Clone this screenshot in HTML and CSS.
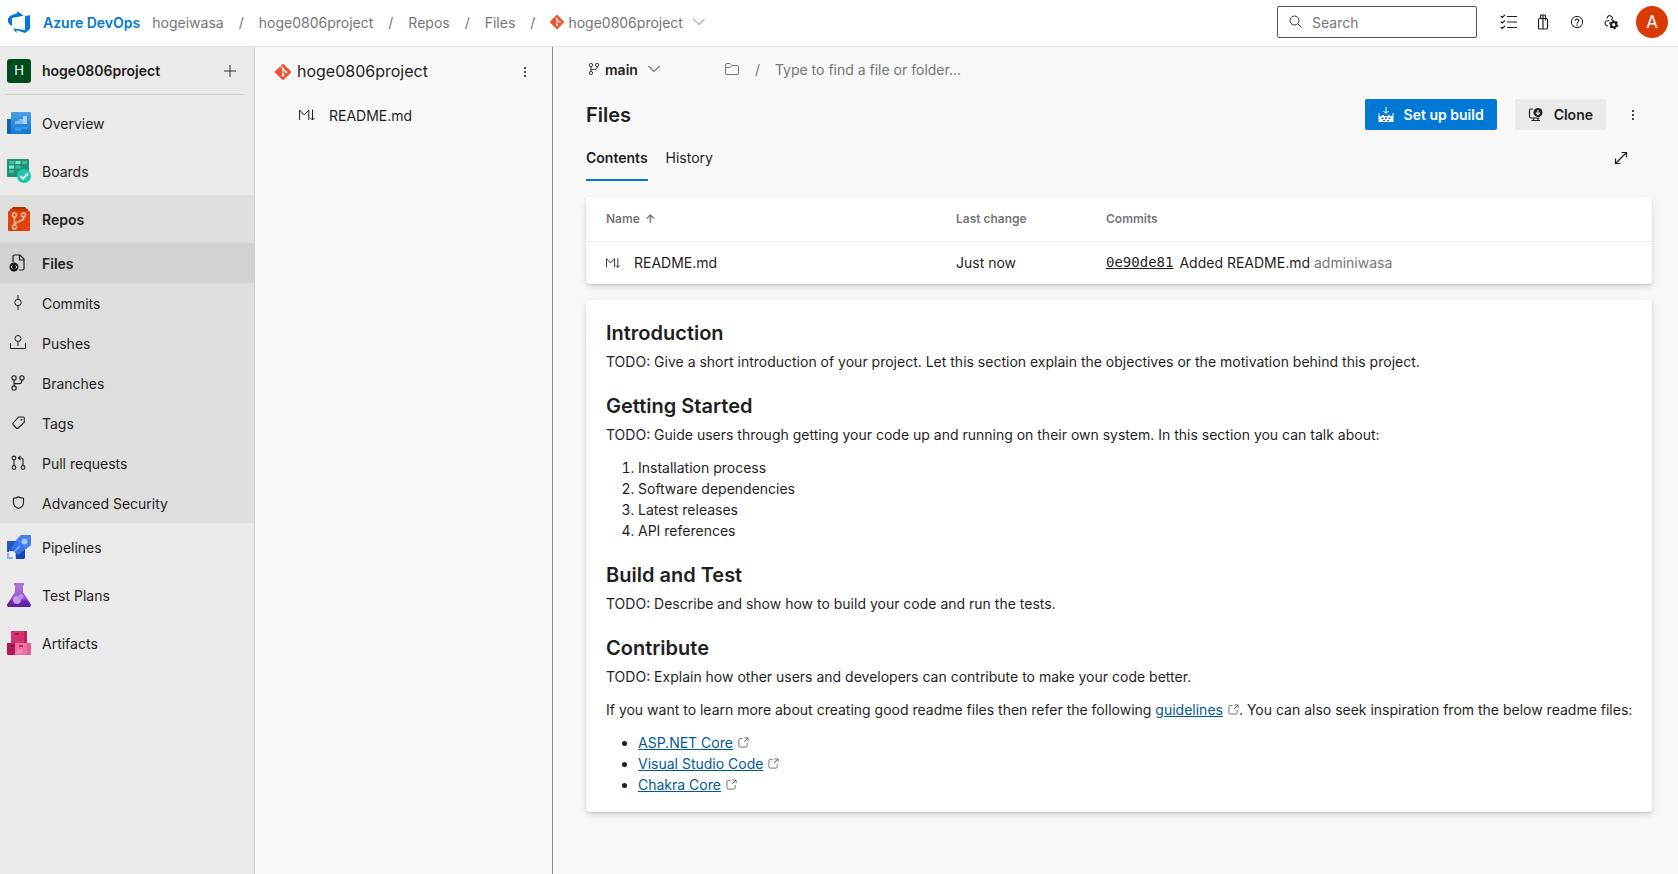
FILE: index.html
```html
<!DOCTYPE html>
<html lang="en">
<head>
<meta charset="utf-8">
<meta name="viewport" content="width=device-width, initial-scale=1">
<title>Files - Repos</title>
<link rel="stylesheet" href="styles.css">
</head>
<body>
<svg class="sprite" aria-hidden="true">
  <symbol id="git" viewBox="0 0 16 16">
    <path d="M7.1.4a1.3 1.3 0 0 1 1.8 0l6.7 6.7a1.3 1.3 0 0 1 0 1.8l-6.7 6.7a1.3 1.3 0 0 1-1.8 0L.4 8.9a1.3 1.3 0 0 1 0-1.800z" fill="#f1502f"/>
    <path d="M5.600 2.200 8 4.700v6.800M8.200 5.200l3 3" fill="none" stroke="#fff" stroke-width="1.100"/>
    <circle cx="8" cy="4.900" r="1.200" fill="#fff"/><circle cx="8" cy="11.500" r="1.200" fill="#fff"/><circle cx="11.100" cy="8" r="1.200" fill="#fff"/>
  </symbol>
  <symbol id="chevron" viewBox="0 0 12 12"><path d="m.5 3 5.500 5.500L11.500 3" fill="none" stroke="currentColor"/></symbol>
  <symbol id="branch" viewBox="0 0 16 16"><g fill="none" stroke="currentColor"><circle cx="4.500" cy="3.500" r="1.900"/><circle cx="11.500" cy="3.500" r="1.900"/><circle cx="4.500" cy="12.500" r="1.900"/><path d="M4.500 5.400v5.200M11.500 5.400v.6a2.500 2.500 0 0 1-2.500 2.500H4.500"/></g></symbol>
  <symbol id="markdown" viewBox="0 0 16 16"><path d="M.6 13V3l4.600 5 4.600-5v10M13.500 2.500V13M11.300 10.800l2.200 2.200 2.200-2.200" fill="none" stroke="currentColor"/></symbol>
  <symbol id="external" viewBox="0 0 12 12"><path d="M5 1.500H2.500a1.500 1.500 0 0 0-1.500 1.500v6.500a1.500 1.500 0 0 0 1.500 1.500h6a1.500 1.500 0 0 0 1.500-1.500V6.500M7 1h4v3.500M11 1 6.500 5.500" fill="none" stroke="currentColor" stroke-width=".9"/></symbol>
  <symbol id="more" viewBox="0 0 16 16"><path d="M7 3h2v2H7zM7 7h2v2H7zM7 11h2v2H7z" fill="#444"/></symbol>
</svg>

<header class="topbar">
  <a class="brand" href="#">
    <svg class="icon-22" viewBox="0 0 22 22"><path fill="#0078d4" d="M0 7.500 2 5l7.300-3V0l6.400 4.700L4 7v7.500l-2-.6-2-2.800zM22 4v14l-5 4-8.500-2.800V22L5 17.500l12 1.400V5.300z"/></svg>
    <span>Azure DevOps</span>
  </a>
  <nav class="crumbs" aria-label="Breadcrumb">
    <a href="#">hogeiwasa</a><span>/</span>
    <a href="#">hoge0806project</a><span>/</span>
    <a href="#">Repos</a><span>/</span>
    <a href="#">Files</a><span>/</span>
    <button class="crumb-repo" type="button"><svg class="icon-14"><use href="#git"/></svg>hoge0806project<svg class="icon-12"><use href="#chevron"/></svg></button>
  </nav>
  <label class="search">
    <svg class="icon-14" viewBox="0 0 14 14"><g fill="none" stroke="#333"><circle cx="6.500" cy="5.500" r="4.500"/><path d="m9.700 8.700 4 4"/></g></svg>
    <input type="search" placeholder="Search" aria-label="Search">
  </label>
  <div class="tools">
    <button type="button" aria-label="Work items"><svg class="icon-18" viewBox="0 0 18 18"><path d="M7 3.500h10M7 9h10M7 14.500h10M.8 3l1.500 1.500L5 1.800M.8 8.500 2.300 10 5 7.300M.8 14l1.500 1.500L5 12.800" fill="none" stroke="#1f1f1f" stroke-width="1.200"/></svg></button>
    <button type="button" aria-label="Marketplace"><svg class="icon-18" viewBox="0 0 18 18"><g fill="none" stroke="#1f1f1f" stroke-width="1.200"><rect x="4.500" y="5.500" width="9" height="10.500" rx="1.200"/><path d="M6.500 5.500V3a1 1 0 0 1 1-1h3a1 1 0 0 1 1 1v2.500M9 2v14M6.500 5.500h5v2"/></g></svg></button>
    <button type="button" aria-label="Help"><svg class="icon-18" viewBox="0 0 18 18"><circle cx="9" cy="9" r="5.600" fill="none" stroke="#1f1f1f"/><path d="M7.300 7.700a1.700 1.700 0 1 1 2.700 1.400c-.7.500-1 .8-1 1.600" fill="none" stroke="#1f1f1f" stroke-width="1.100"/><circle cx="9" cy="12" r=".7" fill="#1f1f1f"/></svg></button>
    <button type="button" aria-label="User settings"><svg class="icon-18" viewBox="0 0 18 18"><g fill="none" stroke="#1f1f1f" stroke-width="1.100"><path d="M5.200 5.500C5 3.600 6.400 2.500 8 2.700c2.400.3 3.200 2.700 1.500 4.300M7.500 7.800H5.500C3.500 8 2.500 9.500 3.300 11.300c.5 1.200 1.500 1.700 2.700 1.700"/></g><g fill="none" stroke="#1f1f1f"><circle cx="11.700" cy="11.700" r="2.600" stroke-width="2"/><circle cx="11.700" cy="11.700" r="3.900" stroke-width="1.400" stroke-dasharray="2.040 2.040"/></g></svg></button>
  </div>
  <button class="avatar" type="button" aria-label="Account">A</button>
</header>

<div class="shell">
  <aside class="sidebar">
    <div class="project">
      <span class="project-tile">H</span>
      <a href="#">hoge0806project</a>
      <button type="button" aria-label="Create new"><svg class="icon-12" viewBox="0 0 12 12"><path d="M6 0v12M0 6h12" stroke="#333" fill="none"/></svg></button>
    </div>
    <nav class="menu" aria-label="Project">
      <a class="hub" href="#"><svg class="icon-24" viewBox="0 0 24 24"><defs><linearGradient id="ov" x2="0" y2="1"><stop stop-color="#4a9ee8"/><stop offset="1" stop-color="#0f78d4"/></linearGradient></defs><path d="M0 8h6v15H1a1 1 0 0 1-1-1z" fill="#1260a8"/><rect x="4" y="1" width="20" height="22" rx="1" fill="url(#ov)"/><path d="M8 13V10h4V8h4V5h4v8z" fill="#83bdf1"/><path d="M16 5h4v8h-4z" fill="#a9d3f7"/><path d="M8 16h12v2H8zM8 18h6v2H8z" fill="#3f97e4"/></svg><span>Overview</span></a>
      <a class="hub" href="#"><svg class="icon-24" viewBox="0 0 24 24"><rect width="22" height="18" rx="1" fill="#22937a"/><path d="M2 2h5v3H2zM8.500 2h5v3h-5zM15 2h5v3h-5zM2 6.500h5v3H2zM8.500 6.500h5v3h-5zM2 11h5v3H2z" fill="#43b99d"/><path d="M8.500 2h5v3h-5zM2 6.500h5v3H2z" fill="#80e6c9"/><circle cx="17" cy="17" r="7" fill="#1dc7a8"/><path d="m13.300 17 2.700 2.700 4.800-4.900" fill="none" stroke="#fff" stroke-width="2"/></svg><span>Boards</span></a>
      <section class="group">
        <a class="hub hub-active" href="#"><svg class="icon-24" viewBox="0 0 24 24"><path d="M6 0h12l2 2v3H4V2z" fill="#b83100"/><rect x="1" y="4" width="22" height="20" rx="1" fill="#df420b"/><path d="M3 2h18v2H3z" fill="#c43a04"/><g fill="none" stroke="#ffc0a3" stroke-width="1.500"><circle cx="7.500" cy="8" r="2"/><circle cx="16.500" cy="8" r="2"/><circle cx="7.500" cy="20" r="2"/><path d="M7.500 10v8M16.500 10v2.500l-9 4"/></g></svg><span>Repos</span></a>
        <a class="sub sub-active" href="#"><svg class="icon-18" viewBox="0 0 18 18"><path d="M4 8V2.500A1.500 1.500 0 0 1 5.500 1h5.500L15 5v9.500a1.500 1.500 0 0 1-1.500 1.500H10M10.500 1v5H15" fill="none" stroke="#1f1f1f" stroke-width="1.200"/><circle cx="5" cy="13" r="4.500" fill="#1f1f1f"/><path d="m3.500 11.500-1.500 1.500 1.500 1.500M6.500 11.500 8 13l-1.500 1.500" fill="none" stroke="#ddd"/></svg><span>Files</span></a>
        <a class="sub" href="#"><svg class="icon-18" viewBox="0 0 18 18"><g fill="none" stroke="#1f1f1f"><circle cx="9" cy="8.500" r="3.200"/><path d="M9 1v4M9 12v4"/></g></svg><span>Commits</span></a>
        <a class="sub" href="#"><svg class="icon-18" viewBox="0 0 18 18"><g fill="none" stroke="#1f1f1f"><circle cx="9" cy="4.500" r="3"/><path d="M9 8v4M1.500 9v5.500h15V9"/></g></svg><span>Pushes</span></a>
        <a class="sub" href="#"><svg class="icon-18"><use href="#branch"/></svg><span>Branches</span></a>
        <a class="sub" href="#"><svg class="icon-18" viewBox="0 0 18 18"><path d="M9.500 3h4.800c.6 0 1 .4 1 1v4.300L9.200 14a1.300 1.300 0 0 1-1.900 0L4.200 10.800a1.300 1.300 0 0 1 0-1.800z" fill="none" stroke="#1f1f1f" stroke-width="1.100"/><circle cx="12.500" cy="5.700" r=".9" fill="#1f1f1f"/></svg><span>Tags</span></a>
        <a class="sub" href="#"><svg class="icon-18" viewBox="0 0 18 18"><g fill="none" stroke="#1f1f1f" stroke-width="1.100"><circle cx="5" cy="4" r="1.900"/><circle cx="5" cy="13.500" r="1.900"/><circle cx="14" cy="13.500" r="1.900"/><path d="M5 6v5.500M14 11.500V5.500a1.500 1.500 0 0 0-1.500-1.500H9.300M11.500 1.800 9.300 4l2.200 2.200"/></g></svg><span>Pull requests</span></a>
        <a class="sub" href="#"><svg class="icon-18" viewBox="0 0 18 18"><path d="M9.500 2.700c1.500 1.100 3 1.500 5 1.500v4.500c0 2.800-2 4.600-5 5.800-3-1.200-5-3-5-5.800V4.200c2 0 3.500-.4 5-1.500z" fill="none" stroke="#1f1f1f" stroke-width="1.100"/></svg><span>Advanced Security</span></a>
      </section>
      <a class="hub" href="#"><svg class="icon-24" viewBox="0 0 24 24"><path d="M0 6h10v11H0z" fill="#2459c4"/><path d="M8 14h10v9l-1 1H9z" fill="#1847b8"/><path d="M14 0h10v10L11 20l-7-7z" fill="#3972e6"/><path d="M14 0h10v10L19 14 9 5z" fill="#4a80ec"/><path d="m13 11-7 7" stroke="#80adf8" stroke-width="1.500"/><circle cx="17.500" cy="6.500" r="3" fill="#a5c4fb"/><path d="M0 18h2v4h4v2H0z" fill="#8fb3f7"/><path d="M2 16h4l3 3-3 3H4v-3H2z" fill="#e3edfd"/></svg><span>Pipelines</span></a>
      <a class="hub" href="#"><svg class="icon-24" viewBox="0 0 24 24"><defs><linearGradient id="fl" x2="0" y2="1"><stop stop-color="#b07ad9"/><stop offset=".65" stop-color="#9050cd"/><stop offset=".72" stop-color="#6d2bb4"/><stop offset="1" stop-color="#5a1da0"/></linearGradient></defs><path d="M8 2h8v7l7.600 12c.8 1.500 0 3-1.600 3H2c-1.600 0-2.400-1.500-1.600-3L8 9z" fill="url(#fl)"/><rect x="7" width="10" height="2.500" fill="#a46fdb"/><circle cx="10" cy="17" r="4" fill="#c79bea"/><circle cx="14" cy="13.500" r="2.500" fill="#bd8be5"/></svg><span>Test Plans</span></a>
      <a class="hub" href="#"><svg class="icon-24" viewBox="0 0 24 24"><path d="M4 0h16v12H4z" fill="#d2336f"/><path d="M17 0h3v12h-3z" fill="#bd2360"/><path d="M8 2h4v2H8z" fill="#a61550"/><path d="M0 12h8v12H1a1 1 0 0 1-1-1z" fill="#b51a57"/><path d="M4 14h4v2H4z" fill="#860d3d"/><path d="M8 12h16v11a1 1 0 0 1-1 1H8z" fill="#ee71a4"/><path d="M20 12h4v12h-4z" fill="#e75e96"/><path d="M12 14h4v2h-4z" fill="#c02964"/><path d="M10 19h6v1h-6zM10 21h4v1h-4z" fill="#f8a9c9"/></svg><span>Artifacts</span></a>
    </nav>
  </aside>

  <section class="tree" aria-label="Repository files">
    <div class="tree-head">
      <svg class="icon-16"><use href="#git"/></svg>
      <h2>hoge0806project</h2>
      <button type="button" aria-label="More actions"><svg class="icon-16"><use href="#more"/></svg></button>
    </div>
    <a class="tree-file" href="#"><svg class="icon-16"><use href="#markdown"/></svg><span>README.md</span></a>
  </section>

  <main class="main">
    <div class="pathbar">
      <button class="branch" type="button"><svg class="icon-14"><use href="#branch"/></svg><span>main</span><svg class="icon-12"><use href="#chevron"/></svg></button>
      <svg class="icon-16 muted" viewBox="0 0 16 16"><path d="M1.500 4A1.500 1.500 0 0 1 3 2.500h3L8 4.500h5A1.500 1.500 0 0 1 14.500 6v6a1.500 1.500 0 0 1-1.500 1.500H3A1.500 1.500 0 0 1 1.500 12zM1.500 6.500H6l2-2" fill="none" stroke="currentColor"/></svg>
      <span class="muted">/</span>
      <input class="path" type="text" placeholder="Type to find a file or folder..." aria-label="Path">
    </div>
    <div class="titlebar">
      <h1>Files</h1>
      <button class="btn btn-primary" type="button"><svg class="icon-16" viewBox="0 0 16 16"><path d="M8 0v6M5.500 4 8 6.500 10.500 4" fill="none" stroke="#fff"/><path d="M.5 6v9h15V6h-1v3H12V8h-2v1H6V8H4v1H1.500V6z" fill="#fff"/><path d="M3.500 10.500h2V12h-2zM7 10.500h2V12H7zM10.500 10.500h2V12h-2zM5 13h2v1H5zM9 13h2v1H9z" fill="#0078d4"/></svg>Set up build</button>
      <button class="btn" type="button"><svg class="icon-16" viewBox="0 0 16 16"><path d="M5 2H3a1.500 1.500 0 0 0-1.500 1.500v6A1.500 1.500 0 0 0 3 11h8.500M5.500 11v2.500M10 11v2.500M3.500 13.500H12" fill="none" stroke="#1f1f1f" stroke-width="1.200"/><circle cx="10" cy="5.500" r="4.500" fill="#1f1f1f"/><path d="M10 3v4.500M8 5.700l2 2 2-2" fill="none" stroke="#eaeaea" stroke-width="1.200"/></svg>Clone</button>
      <button class="plain" type="button" aria-label="More actions"><svg class="icon-16"><use href="#more"/></svg></button>
    </div>
    <div class="tabs" role="tablist">
      <button class="tab tab-active" type="button" role="tab" aria-selected="true">Contents</button>
      <button class="tab" type="button" role="tab" aria-selected="false">History</button>
      <button class="plain expand" type="button" aria-label="Full screen"><svg class="icon-16" viewBox="0 0 16 16"><path d="M2.500 13.500l11-11M8.500 2.500h5v5M2.500 8.500v5h5" fill="none" stroke="#1f1f1f" stroke-width="1.200"/></svg></button>
    </div>

    <section class="card">
      <table class="files">
        <thead><tr><th class="col-name" scope="col">Name <span class="sort">↑</span></th><th class="col-change" scope="col">Last change</th><th scope="col">Commits</th></tr></thead>
        <tbody><tr><td><a class="file" href="#"><svg class="icon-14"><use href="#markdown"/></svg>README.md</a></td><td>Just now</td><td><div class="commit"><a class="hash" href="#">0e90de81</a><span>Added README.md <span class="muted">adminiwasa</span></span></div></td></tr></tbody>
      </table>
    </section>

    <article class="card readme">
      <h2>Introduction</h2>
      <p>TODO: Give a short introduction of your project. Let this section explain the objectives or the motivation behind this project.</p>
      <h2>Getting Started</h2>
      <p>TODO: Guide users through getting your code up and running on their own system. In this section you can talk about:</p>
      <ol>
        <li>Installation process</li>
        <li>Software dependencies</li>
        <li>Latest releases</li>
        <li>API references</li>
      </ol>
      <h2>Build and Test</h2>
      <p>TODO: Describe and show how to build your code and run the tests.</p>
      <h2>Contribute</h2>
      <p>TODO: Explain how other users and developers can contribute to make your code better.</p>
      <p>If you want to learn more about creating good readme files then refer the following <a href="#">guidelines</a><svg class="ext"><use href="#external"/></svg>. You can also seek inspiration from the below readme files:</p>
      <ul>
        <li><a href="#">ASP.NET Core</a><svg class="ext"><use href="#external"/></svg></li>
        <li><a href="#">Visual Studio Code</a><svg class="ext"><use href="#external"/></svg></li>
        <li><a href="#">Chakra Core</a><svg class="ext"><use href="#external"/></svg></li>
      </ul>
    </article>
  </main>
</div>
</body>
</html>
```
FILE: styles.css
```css
* { box-sizing: border-box; }

body {
  margin: 0;
  min-height: 100vh;
  display: flex;
  flex-direction: column;
  background: #f8f8f8;
  color: #1f1f1f;
  font: 14px/21px Inter, "Liberation Sans", sans-serif;
}

h1, h2, p, ol, ul { margin: 0; }
a { color: inherit; text-decoration: none; }
button, input { font: inherit; color: inherit; border: 0; padding: 0; background: none; }
button { cursor: pointer; }
svg { flex: none; display: block; }

.sprite { display: none; }
.muted { color: #767676; }
.icon-12 { width: 12px; height: 12px; }
.icon-14 { width: 14px; height: 14px; }
.icon-16 { width: 16px; height: 16px; }
.icon-18 { width: 18px; height: 18px; }
.icon-22 { width: 22px; height: 22px; }
.icon-24 { width: 24px; height: 24px; }

/* Top bar */
.topbar {
  display: flex;
  align-items: center;
  min-height: 47px;
  padding: 0 10px 2px 8px;
  background: #fff;
  border-bottom: 1px solid #e1e1e1;
}
.brand {
  display: flex;
  align-items: center;
  gap: 13px;
  color: #0078d4;
  font-weight: 600;
}
.crumbs {
  display: flex;
  align-items: center;
  gap: 15px;
  margin-left: 12px;
  color: #767676;
}
.crumb-repo { display: flex; align-items: center; gap: 4px; }
.crumb-repo .icon-12 { margin-left: 6px; }
.search {
  display: flex;
  align-items: center;
  gap: 10px;
  width: 200px;
  height: 32px;
  margin-left: auto;
  padding: 0 10px;
  border: 1px solid #555;
  border-radius: 2px;
}
.search input { flex: 1; min-width: 0; outline: 0; }
input::placeholder { color: #767676; opacity: 1; }
.tools { display: flex; gap: 16px; margin: 0 16px 0 23px; }
.avatar {
  width: 32px;
  height: 32px;
  border-radius: 50%;
  background: #da3b01;
  color: #fff;
  font-size: 17px;
}

/* Shell */
.shell {
  flex: 1;
  display: grid;
  grid-template-columns: 255px 298px minmax(0, 1fr);
}

/* Sidebar */
.sidebar { background: #eaeaea; border-right: 1px solid #d0d0d0; }
.project {
  display: flex;
  align-items: center;
  gap: 11px;
  height: 48px;
  margin: 0 10px 4px 5px;
  padding: 0 8px 0 2px;
  border-bottom: 1px solid #d0d0d0;
  font-weight: 600;
}
.project button { margin-left: auto; }
.project-tile {
  display: grid;
  place-items: center;
  width: 24px;
  height: 24px;
  border-radius: 3px;
  background: #004b1c;
  color: #fff;
  font-size: 13px;
  font-weight: 400;
}
.hub, .sub { display: flex; align-items: center; padding-left: 7px; gap: 11px; }
.hub { height: 48px; }
.sub { height: 40px; padding-left: 9px; gap: 15px; }
.hub span, .sub span { padding-top: 1px; }
.group { background: #dedede; }
.hub-active, .sub-active { font-weight: 600; }
.sub-active { background: #d2d2d2; border-radius: 0 3px 3px 0; }

/* Repository tree */
.tree { border-right: 1px solid #8a8a8a; }
.tree-head { display: flex; align-items: center; gap: 6px; height: 49px; padding: 0 19px 0 20px; }
.tree-head h2 { font-size: 16px; font-weight: 400; }
.tree-head button { margin-left: auto; }
.tree-file { display: flex; align-items: center; gap: 14px; height: 38px; padding-left: 44px; }

/* Main column */
.main { padding: 0 26px 0 33px; }
.pathbar { display: flex; align-items: center; height: 44px; gap: 15px; }
.branch { display: flex; align-items: center; gap: 4px; margin: 0 49px 0 1px; font-weight: 600; }
.branch .icon-12 { margin-left: 6px; }
.path { flex: 1; min-width: 0; outline: 0; }
.titlebar { display: flex; align-items: center; height: 47px; }
.titlebar h1 { margin-right: auto; font-size: 20px; line-height: 26px; font-weight: 600; }
.btn {
  display: flex;
  align-items: center;
  gap: 10px;
  margin-left: 18px;
  padding: 5px 13px;
  border-radius: 2px;
  background: #eaeaea;
  font-weight: 600;
}
.btn-primary { background: #0078d4; color: #fff; }
.plain { margin: 0 11px 0 19px; }
.tabs { display: flex; align-items: stretch; gap: 18px; height: 43px; margin-bottom: 16px; }
.tab { padding-bottom: 2px; border-bottom: 2px solid transparent; }
.tab-active { border-color: #0078d4; font-weight: 600; }
.expand { margin: 0 23px 0 auto; padding-bottom: 4px; }

/* Cards */
.card {
  margin-bottom: 16px;
  background: #fff;
  border-radius: 4px;
  box-shadow: 0 3px 7px rgba(0, 0, 0, .13), 0 1px 2px rgba(0, 0, 0, .11);
}
.files { width: 100%; border-collapse: collapse; table-layout: fixed; text-align: left; }
.files th { height: 44px; padding: 0; border-bottom: 1px solid #eaeaea; color: #767676; font-size: 12px; font-weight: 600; }
.files td { height: 43px; padding: 0; }
.files th:first-child, .files td:first-child { padding-left: 20px; }
.col-name { width: 370px; }
.col-change { width: 150px; }
.sort { margin-left: 2px; }
.file { display: flex; align-items: center; gap: 14px; }
.commit { display: flex; gap: 6px; }
.hash { font-family: "DejaVu Sans Mono", "Liberation Mono", monospace; text-decoration: underline; }

/* Rendered readme */
.readme { padding: 20px 8px 17px 20px; }
.readme h2 { margin: 21px 0 5px; font-size: 20px; line-height: 26px; font-weight: 600; }
.readme h2:first-child { margin-top: 0; }
.readme p + p, .readme ol, .readme ul { margin-top: 12px; }
.readme ol, .readme ul { padding-left: 32px; }
.readme a { color: #005a9e; text-decoration: underline; }
.ext { display: inline-block; width: 11px; height: 11px; margin-left: 5px; color: #555; }
```
